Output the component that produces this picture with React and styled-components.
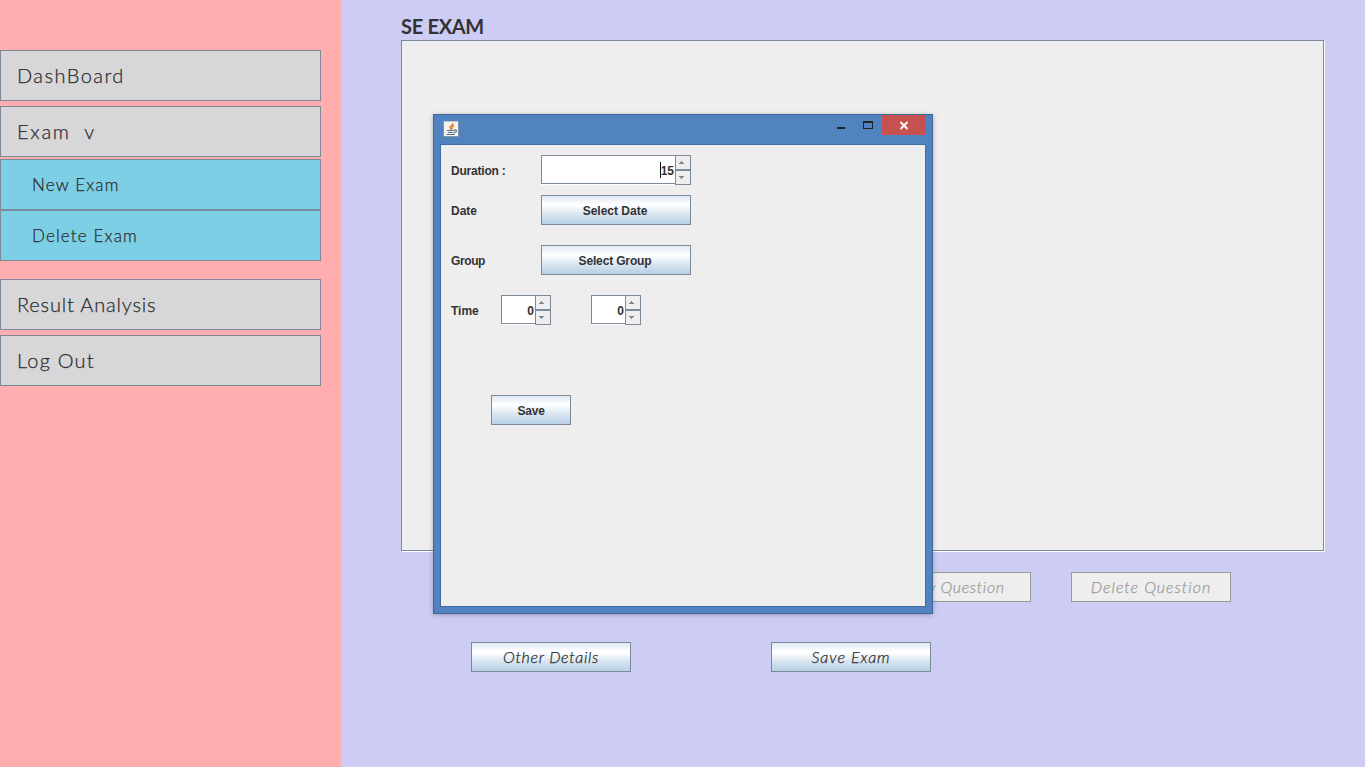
import React from "react";
import styled, { createGlobalStyle } from "styled-components";

const GlobalStyle = createGlobalStyle`
  * { box-sizing: border-box; }
  body { margin: 0; overflow: hidden; }
  button { margin: 0; padding: 0; border-radius: 0; }
`;

const gothic = `"Century Gothic", "URW Gothic", Lato, sans-serif`;

const Screen = styled.div`
  position: relative;
  display: flex;
  width: 1365px;
  height: 767px;
  background: #cdccf5;
  color: #333;
  font-family: ${gothic};
`;

const Sidebar = styled.nav`
  display: flex;
  flex-direction: column;
  gap: 5px;
  width: 341px;
  padding: 50px 20px 0 0;
  background: #ffadaf;
`;

const NavButton = styled.button`
  height: 51px;
  padding: 0 0 0 16px;
  border: 1px solid #7a8a99;
  background: #d7d7d9;
  color: #2c2c2c;
  font: 300 20px/49px ${gothic};
  -webkit-text-stroke: 0.25px currentColor;
  letter-spacing: ${(p) => p.$track || 0}px;
  text-align: left;
  white-space: pre;
`;

const SubMenu = styled.div`
  display: flex;
  flex-direction: column;
  margin: -3px 0 13px;
`;

const SubButton = styled(NavButton)`
  padding-left: 31px;
  background: #7dcfe5;
  font-size: 17px;
`;

const Content = styled.main`
  flex: 1;
  padding: 12px 41px 0 60px;
`;

const Title = styled.h1`
  height: 28px;
  margin: 0;
  font: 700 20px/28px ${gothic};
  letter-spacing: ${(p) => p.$track || 0}px;
`;

const Panel = styled.section`
  width: 923px;
  height: 511px;
  border: 1px solid #7a8a99;
  background: #eee;
  box-shadow: 1px 1px 0 #fff;
`;

const Actions = styled.div`
  display: flex;
  gap: ${(p) => p.$gap}px;
  margin-top: ${(p) => p.$top}px;
  padding-left: ${(p) => p.$indent}px;
`;

const SwingButton = styled.button`
  width: ${(p) => p.$width}px;
  height: 30px;
  border: 1px solid #7a8a99;
  background: linear-gradient(#dfe9f3 0, #fff 30%, #fff 34%, #dce7f1 62%, #b8cfe5 100%);
  color: #333;
  font: 700 12px/28px "Liberation Sans", Arial, sans-serif;
  text-align: center;
  padding: 2px ${(p) => p.$shift ?? 2}px 0 0;
  line-height: 26px;
  letter-spacing: ${(p) => p.$track || 0}px;
`;

const ActionButton = styled(SwingButton)`
  padding: 0 0 0 ${(p) => p.$lead || 0}px;
  font: italic 300 16px/28px ${gothic};
  color: #2c2c2c;
  -webkit-text-stroke: 0.25px currentColor;
  &:disabled {
    border-color: #999;
    background: #eee;
    color: #999;
  }
`;

const Dialog = styled.section`
  position: absolute;
  left: 433px;
  top: 114px;
  display: flex;
  flex-direction: column;
  width: 500px;
  height: 500px;
  padding: 0 6px 6px;
  border: 1px solid #3c6699;
  background: #5183c1;
  box-shadow: 0 1px 5px rgba(0, 0, 0, 0.25);
`;

const TitleBar = styled.header`
  display: flex;
  justify-content: space-between;
  height: 29px;
  padding-left: 3px;
`;

const AppIcon = styled.svg`
  width: 16px;
  height: 16px;
  margin-top: 6px;
`;

const WindowControls = styled.svg`
  width: 98px;
  height: 20px;
`;

const Form = styled.form`
  display: flex;
  flex: 1;
  flex-direction: column;
  align-items: flex-start;
  padding: 10px;
  border: 1px solid #416da4;
  background: #eee;
  font: 700 12px/30px "Liberation Sans", Arial, sans-serif;
`;

const Row = styled.div`
  display: flex;
  height: 30px;
  margin-bottom: ${(p) => p.$after}px;
  padding-left: ${(p) => p.$indent || 0}px;
`;

const Label = styled.label`
  width: ${(p) => p.$width}px;
  padding-top: 1px;
  letter-spacing: ${(p) => p.$track || 0}px;
`;

const SpinnerBox = styled.div`
  display: flex;
  width: ${(p) => p.$width}px;
  height: 30px;
  margin-right: 40px;
`;

const Field = styled.div`
  display: flex;
  flex: 1;
  justify-content: flex-end;
  align-items: center;
  height: 29px;
  padding: 2px 1px 0 0;
  border: solid #7a8a99;
  border-width: 1px 0 1px 1px;
  background: #fff;
  box-shadow: 0 1px 0 #fff;
`;

const Caret = styled.i`
  width: 1px;
  height: 16px;
  margin: -2px 0 0 0;
  background: #111;
`;

const Arrows = styled.div`
  display: flex;
  flex-direction: column;
  width: 16px;
`;

const ArrowButton = styled.button`
  display: block;
  height: 15px;
  border: 1px solid #7a8a99;
  background: #eee;
  svg { display: block; }
`;

function Spinner({ width, value, focused }) {
  return (
    <SpinnerBox $width={width}>
      <Field>{focused && <Caret />}{value}</Field>
      <Arrows>
        <ArrowButton type="button" aria-label="Increase">
          <svg width="14" height="13" shapeRendering="crispEdges" fill="#7a8a99"><path d="M5 5h1v1h1v1h1v1H3V7h1V6h1z" /></svg>
        </ArrowButton>
        <ArrowButton type="button" aria-label="Decrease">
          <svg width="14" height="13" shapeRendering="crispEdges" fill="#7a8a99"><path d="M3 5h5v1H7v1H6v1H5V7H4V6H3z" /></svg>
        </ArrowButton>
      </Arrows>
    </SpinnerBox>
  );
}

function JavaIcon() {
  return (
    <AppIcon viewBox="0 0 16 16">
      <rect width="16" height="16" rx="1" fill="#8793a0" />
      <rect x="1" y="0.5" width="14" height="14.5" fill="#f3f3f2" />
      <path d="M10 2c.5 2.2-3.6 2.7-3 4.6L8.5 9M11 4.5C8.5 5.5 8.7 6.5 9.3 8" fill="none" stroke="#e57a22" strokeWidth="1.4" />
      <path d="M4 9.5h7M5 11.5h5M3.5 13.5h8.5M11 9c3.6-.8 3 2.6-.4 2.6" fill="none" stroke="#4f738f" strokeWidth="1.2" />
    </AppIcon>
  );
}

export default function App() {
  return (
    <>
      <GlobalStyle />
      <Screen>
        <Sidebar>
          <NavButton $track={1.45}>DashBoard</NavButton>
          <NavButton $track={1.7}>{"Exam  v"}</NavButton>
          <SubMenu>
            <SubButton $track={1.15}>New Exam</SubButton>
            <SubButton $track={1.15}>Delete Exam</SubButton>
          </SubMenu>
          <NavButton $track={0.83}>Result Analysis</NavButton>
          <NavButton $track={1.2}>Log Out</NavButton>
        </Sidebar>
        <Content>
          <Title $track={-0.3}>SE EXAM</Title>
          <Panel />
          <Actions $top={21} $indent={470} $gap={40}>
            <ActionButton $width={160} $track={0.65} $lead={7} disabled>New Question</ActionButton>
            <ActionButton $width={160} $track={1} disabled>Delete Question</ActionButton>
          </Actions>
          <Actions $top={40} $indent={70} $gap={140}>
            <ActionButton $width={160} $track={0.7}>Other Details</ActionButton>
            <ActionButton $width={160} $track={0.95}>Save Exam</ActionButton>
          </Actions>
        </Content>
        <Dialog>
          <TitleBar>
            <JavaIcon />
            <WindowControls viewBox="0 0 98 20" shapeRendering="crispEdges">
              <path d="M9 12h8v2H9z" fill="#222" />
              <path d="M35 6h10v8H35zM36 8v5h8V8z" fill="#222" fillRule="evenodd" />
              <path d="M54 0h45v20H54z" fill="#c75050" />
              <path d="M72.5 7l7 7M79.5 7l-7 7" stroke="#fff" strokeWidth="1.8" shapeRendering="auto" />
            </WindowControls>
          </TitleBar>
          <Form>
            <Row $after={10}><Label $width={90} $track={-0.2}>Duration :</Label><Spinner width={150} value="15" focused /></Row>
            <Row $after={20}><Label $width={90}>Date</Label><SwingButton type="button" $width={150}>Select Date</SwingButton></Row>
            <Row $after={20}><Label $width={90} $track={-0.4}>Group</Label><SwingButton type="button" $width={150} $track={-0.15}>Select Group</SwingButton></Row>
            <Row $after={70}><Label $width={50}>Time</Label><Spinner width={50} value="0" /><Spinner width={50} value="0" /></Row>
            <Row $indent={40}><SwingButton type="button" $width={80} $track={-0.2} $shift={0}>Save</SwingButton></Row>
          </Form>
        </Dialog>
      </Screen>
    </>
  );
}
